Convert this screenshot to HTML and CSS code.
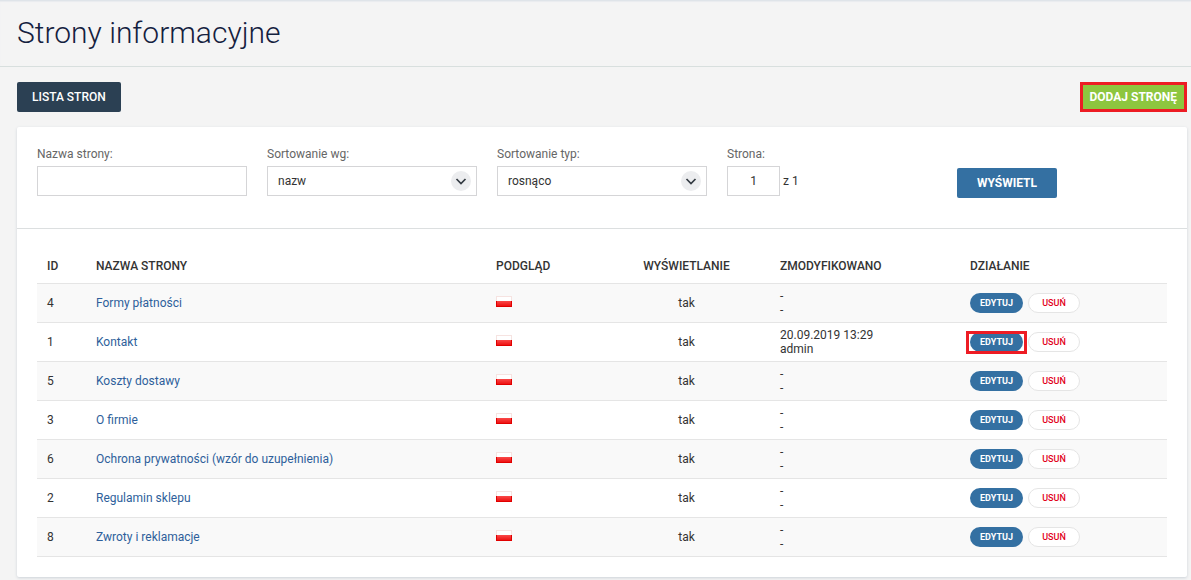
FILE: index.html
```html
<!DOCTYPE html>
<html lang="pl">
<head>
    <meta charset="UTF-8">
    <meta name="viewport" content="width=device-width, initial-scale=1.0">
    <title>Strony informacyjne</title>
    <link rel="stylesheet" href="styles.css">
</head>
<body>

    <header class="page-header">
        <h1>Strony informacyjne</h1>
    </header>

    <main class="content">
        <div class="toolbar">
            <button type="button" class="btn btn-dark">LISTA STRON</button>
            <button type="button" class="btn btn-add">DODAJ STRONĘ</button>
        </div>

        <div class="panel">
            <form class="filters">
                <div class="field">
                    <label for="name">Nazwa strony:</label>
                    <input type="text" id="name">
                </div>
                <div class="field">
                    <label for="sort-by">Sortowanie wg:</label>
                    <div class="select">
                        <select id="sort-by">
                            <option>nazw</option>
                        </select>
                        <svg class="arrow" viewBox="0 0 20 20"><circle cx="10" cy="10" r="10"/><path d="M5.5 8l4.5 4.5L14.5 8"/></svg>
                    </div>
                </div>
                <div class="field">
                    <label for="sort-type">Sortowanie typ:</label>
                    <div class="select">
                        <select id="sort-type">
                            <option>rosnąco</option>
                        </select>
                        <svg class="arrow" viewBox="0 0 20 20"><circle cx="10" cy="10" r="10"/><path d="M5.5 8l4.5 4.5L14.5 8"/></svg>
                    </div>
                </div>
                <div class="field field-page">
                    <label for="page">Strona:</label>
                    <div class="pager">
                        <input type="text" id="page" value="1">
                        <span>z 1</span>
                    </div>
                </div>
                <button type="button" class="btn btn-blue">WYŚWIETL</button>
            </form>

            <div class="list">
                <table>
                    <colgroup>
                        <col class="col-id">
                        <col class="col-name">
                        <col class="col-preview">
                        <col class="col-visible">
                        <col class="col-modified">
                        <col>
                    </colgroup>
                    <thead>
                        <tr>
                            <th>ID</th>
                            <th>NAZWA STRONY</th>
                            <th>PODGLĄD</th>
                            <th class="center">WYŚWIETLANIE</th>
                            <th>ZMODYFIKOWANO</th>
                            <th>DZIAŁANIE</th>
                        </tr>
                    </thead>
                    <tbody>
                        <tr>
                            <td>4</td>
                            <td><a href="#">Formy płatności</a></td>
                            <td><span class="flag"></span></td>
                            <td class="center">tak</td>
                            <td>-<br>-</td>
                            <td><div class="actions"><button type="button" class="pill edit">EDYTUJ</button><button type="button" class="pill delete">USUŃ</button></div></td>
                        </tr>
                        <tr>
                            <td>1</td>
                            <td><a href="#">Kontakt</a></td>
                            <td><span class="flag"></span></td>
                            <td class="center">tak</td>
                            <td>20.09.2019 13:29<br>admin</td>
                            <td><div class="actions"><span class="marked"><button type="button" class="pill edit">EDYTUJ</button></span><button type="button" class="pill delete">USUŃ</button></div></td>
                        </tr>
                        <tr>
                            <td>5</td>
                            <td><a href="#">Koszty dostawy</a></td>
                            <td><span class="flag"></span></td>
                            <td class="center">tak</td>
                            <td>-<br>-</td>
                            <td><div class="actions"><button type="button" class="pill edit">EDYTUJ</button><button type="button" class="pill delete">USUŃ</button></div></td>
                        </tr>
                        <tr>
                            <td>3</td>
                            <td><a href="#">O firmie</a></td>
                            <td><span class="flag"></span></td>
                            <td class="center">tak</td>
                            <td>-<br>-</td>
                            <td><div class="actions"><button type="button" class="pill edit">EDYTUJ</button><button type="button" class="pill delete">USUŃ</button></div></td>
                        </tr>
                        <tr>
                            <td>6</td>
                            <td><a href="#">Ochrona prywatności (wzór do uzupełnienia)</a></td>
                            <td><span class="flag"></span></td>
                            <td class="center">tak</td>
                            <td>-<br>-</td>
                            <td><div class="actions"><button type="button" class="pill edit">EDYTUJ</button><button type="button" class="pill delete">USUŃ</button></div></td>
                        </tr>
                        <tr>
                            <td>2</td>
                            <td><a href="#">Regulamin sklepu</a></td>
                            <td><span class="flag"></span></td>
                            <td class="center">tak</td>
                            <td>-<br>-</td>
                            <td><div class="actions"><button type="button" class="pill edit">EDYTUJ</button><button type="button" class="pill delete">USUŃ</button></div></td>
                        </tr>
                        <tr>
                            <td>8</td>
                            <td><a href="#">Zwroty i reklamacje</a></td>
                            <td><span class="flag"></span></td>
                            <td class="center">tak</td>
                            <td>-<br>-</td>
                            <td><div class="actions"><button type="button" class="pill edit">EDYTUJ</button><button type="button" class="pill delete">USUŃ</button></div></td>
                        </tr>
                    </tbody>
                </table>
            </div>
        </div>
    </main>

</body>
</html>
```
FILE: styles.css
```css
* {
    box-sizing: border-box;
}
body {
    margin: 0;
    font-family: Roboto, Arial, sans-serif;
    font-size: 12px;
    line-height: 14px;
    color: #333;
    background-color: #f4f4f4;
}
button, input, select {
    font-family: inherit;
    font-size: 12px;
    color: #333;
}
.page-header {
    padding: 12px 17px 14px;
    border-top: 1px solid #dfe4e9;
    border-bottom: 1px solid #d8dfde;
    box-shadow: inset 0 1px 1px #e9ecef;
}
h1 {
    margin: 0;
    font-size: 30px;
    font-weight: 300;
    line-height: 39px;
    color: #14213f;
}
.content {
    padding: 15px 4px 3px 17px;
}
.toolbar {
    display: flex;
    justify-content: space-between;
    margin-bottom: 15px;
}
.btn {
    height: 30px;
    padding: 0 15px;
    border: none;
    border-radius: 2px;
    font-weight: 500;
    color: #fff;
    cursor: pointer;
}
.btn-dark {
    background-color: #2b4053;
}
.btn-add {
    padding: 0 7px;
    border: 3px solid #ed1c24;
    border-radius: 0;
    font-weight: 700;
    background-color: #8dc63f;
}
.btn-blue {
    width: 100px;
    margin: 21px 0 0 130px;
    font-weight: 700;
    background-color: #3470a2;
}
.panel {
    background-color: #fff;
    border-radius: 2px;
    box-shadow: 0 1px 3px #ccd2d8;
}
.filters {
    display: flex;
    align-items: flex-start;
    gap: 20px;
    padding: 20px 20px 30px;
    border-bottom: 1px solid #dcdfe0;
}
.field {
    width: 210px;
}
.field-page {
    width: 80px;
}
.field label {
    display: block;
    margin-bottom: 5px;
    color: #666;
}
.field input, .field select {
    display: block;
    width: 100%;
    height: 30px;
    padding: 0 10px;
    border: 1px solid #d5d5d7;
    border-radius: 0;
    background-color: #fff;
}
.select {
    position: relative;
}
.field select {
    appearance: none;
}
.arrow {
    position: absolute;
    top: 5px;
    right: 6px;
    width: 20px;
    height: 20px;
    pointer-events: none;
}
.arrow circle {
    fill: #ecedef;
}
.arrow path {
    fill: none;
    stroke: #333a42;
    stroke-width: 1.7;
}
.pager {
    display: flex;
    align-items: center;
    gap: 3px;
}
.field .pager input {
    width: 53px;
    text-align: center;
}
.list {
    padding: 20px;
}
table {
    width: 100%;
    table-layout: fixed;
    border-collapse: separate;
    border-spacing: 0;
}
.col-id {
    width: 49px;
}
.col-name {
    width: 400px;
}
.col-preview {
    width: 117px;
}
.col-visible {
    width: 167px;
}
.col-modified {
    width: 190px;
}
th {
    height: 35px;
    padding: 0 10px;
    border-bottom: 1px solid #e5e5e5;
    font-weight: 500;
    text-align: left;
}
td {
    height: 39px;
    padding: 0 10px;
    border-bottom: 1px solid #e5e5e5;
}
tbody tr:nth-child(odd) {
    background-color: #f9f9f9;
}
th.center, td.center {
    text-align: center;
}
td a {
    color: #2e5f9b;
    text-decoration: none;
}
.flag {
    display: block;
    width: 16px;
    height: 11px;
    margin-bottom: 3px;
    border: 1px solid #e30000;
    border-image: linear-gradient(#f6e3e1 45%, #e00000 45%) 1;
    background: linear-gradient(#fff 44%, #fa4a4a 44%, #ee1212);
}
.actions {
    display: flex;
    gap: 5px;
}
.pill {
    width: 53px;
    height: 20px;
    padding: 0;
    border: none;
    border-radius: 10px;
    font-size: 9px;
    font-weight: 700;
    cursor: pointer;
}
.edit {
    color: #fff;
    background-color: #3470a2;
}
.delete {
    width: 52px;
    border: 1px solid #e5e5e5;
    font-weight: 500;
    color: #e2001a;
    background-color: #fff;
}
/* red frame around the button */
.marked {
    position: relative;
    display: flex;
}
.marked::after {
    content: "";
    position: absolute;
    inset: -1px -4px -2px;
    border: 3px solid #ed1c24;
    pointer-events: none;
}
```
